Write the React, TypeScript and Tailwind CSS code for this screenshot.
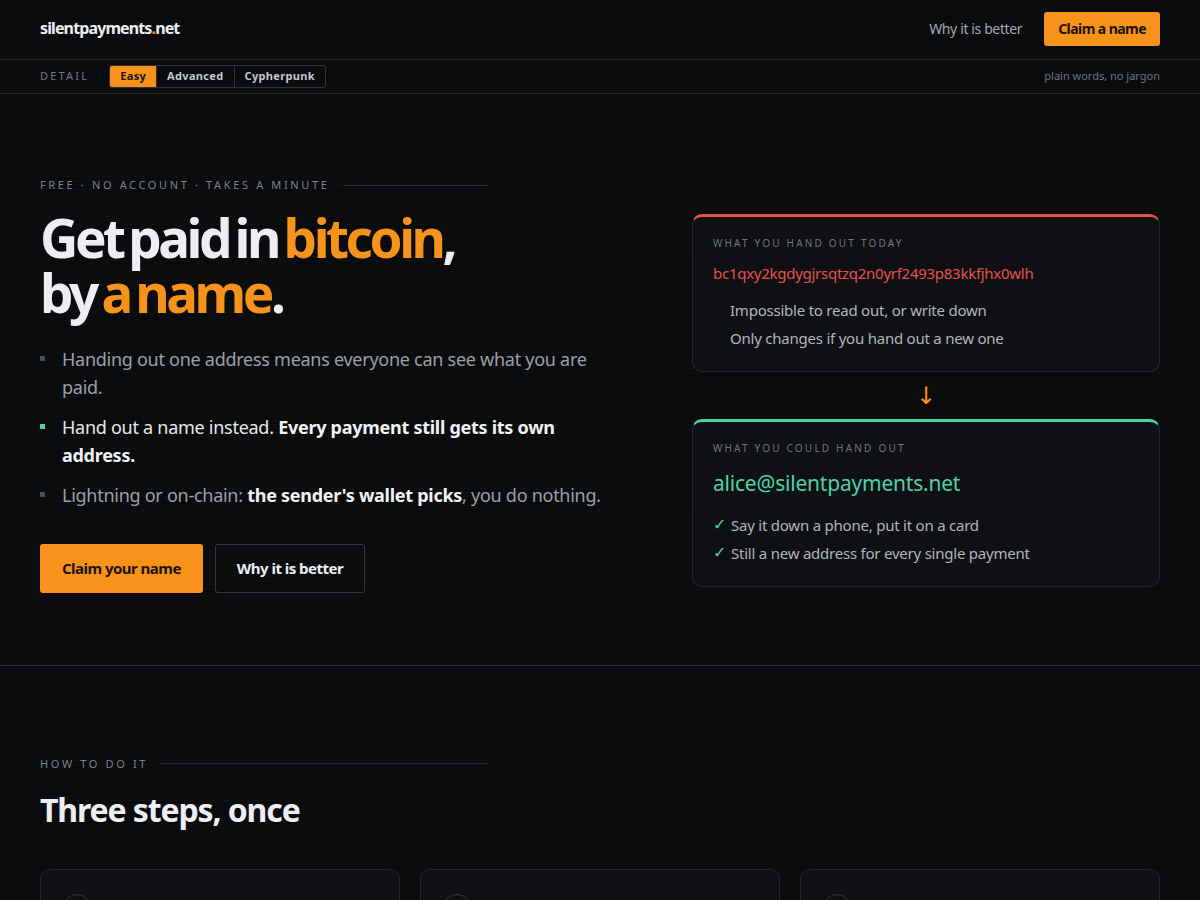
import React, { useState } from 'react'

const levels = ['Easy', 'Advanced', 'Cypherpunk']

const Eyebrow = ({ children }: { children: React.ReactNode }) => (
  <div className="flex items-center gap-[13px] w-[448px]">
    <span className="text-[11px] tracking-[0.24em] uppercase text-[#7d828b] whitespace-nowrap">{children}</span>
    <span className="h-px flex-1 bg-[#2a2d33]" />
  </div>
)

export default function App() {
  const [level, setLevel] = useState('Easy')

  return (
    <div className="min-h-screen bg-[#0a0b0d] text-[#e8eaed] font-['Noto_Sans','Open_Sans',sans-serif]">
      {/* Top bar */}
      <header className="h-[60px] px-10 flex items-center justify-between border-b border-[#24262b]">
        <div className="-mt-[3px] text-[16px] font-bold tracking-[-0.055em] text-[#eceef1]">
          silentpayments<span className="text-[#f7931a]">.</span>net
        </div>
        <div className="-mt-[2px] flex items-center gap-[22px]">
          <a className="text-[14px] tracking-[-0.027em] text-[#a3a8b0]">Why it is better</a>
          <button className="h-[34px] px-[14px] rounded-[3px] bg-[#f7931a] text-[#1a1206] text-[14px] tracking-[-0.04em] font-bold">
            Claim a name
          </button>
        </div>
      </header>

      {/* Detail level */}
      <div className="h-[34px] px-10 flex items-center justify-between border-b border-[#24262b]">
        <div className="flex items-center gap-[20px]">
          <span className="text-[11px] tracking-[0.2em] text-[#737881]">DETAIL</span>
          <div className="flex h-[23px] border border-[#2e3137] rounded-[3px] overflow-hidden">
            {levels.map((l, i) => (
              <button
                key={l}
                onClick={() => setLevel(l)}
                className={`px-[10px] text-[11px] font-bold tracking-[0.03em] ${i > 0 ? 'border-l border-[#2e3137]' : ''} ${
                  level === l ? 'bg-[#f7931a] text-[#1a1206]' : 'text-[#c3c7cd]'
                }`}
              >
                {l}
              </button>
            ))}
          </div>
        </div>
        <span className="text-[11px] text-[#6f747c]">plain words, no jargon</span>
      </div>

      <main className="bg-[repeating-linear-gradient(0deg,rgba(255,255,255,0.014)_0px,rgba(255,255,255,0.014)_1px,transparent_1px,transparent_4px)]">
        {/* Hero */}
        <section className="px-10 pt-[83px] pb-[72px] border-b border-[#2a2d33] grid grid-cols-[1fr_468px] gap-[72px]">
          <div>
            <Eyebrow>Free · No account · Takes a minute</Eyebrow>
            <h1 className="mt-[16px] text-[53px] leading-[55px] font-bold tracking-[-0.065em] [word-spacing:-0.09em] text-[#eceef1]">
              Get paid in <span className="text-[#f7931a]">bitcoin</span>,<br />
              by <span className="text-[#f7931a]">a name</span>.
            </h1>
            <ul className="mt-[25px] flex flex-col gap-3 text-[18px] leading-[28px] tracking-[-0.015em]">
              <li className="flex gap-[17px] text-[#9ba0a8]">
                <span className="mt-[11px] w-[5px] h-[5px] shrink-0 bg-[#4a4e55]" />
                <span>Handing out one address means everyone can see what you are paid.</span>
              </li>
              <li className="flex gap-[17px] text-[#e6e8eb]">
                <span className="mt-[11px] w-[5px] h-[5px] shrink-0 bg-[#4fd1a5]" />
                <span>
                  Hand out a name instead. <b className="font-bold text-[#f1f2f4]">Every payment still gets its own address.</b>
                </span>
              </li>
              <li className="flex gap-[17px] text-[#9ba0a8]">
                <span className="mt-[11px] w-[5px] h-[5px] shrink-0 bg-[#4a4e55]" />
                <span>
                  Lightning or on-chain: <b className="font-bold text-[#f1f2f4]">the sender's wallet picks</b>, you do nothing.
                </span>
              </li>
            </ul>
            <div className="mt-[35px] flex gap-3">
              <button className="h-[49px] px-[22px] rounded-[3px] bg-[#f7931a] text-[#1a1206] text-[15px] tracking-[-0.035em] font-bold">
                Claim your name
              </button>
              <button className="h-[49px] px-[21px] rounded-[3px] border border-[#34373d] text-[#eceef1] text-[15px] tracking-[-0.035em] font-bold">
                Why it is better
              </button>
            </div>
          </div>

          <div className="pt-[37px] flex flex-col items-stretch">
            <div className="rounded-[10px] border border-[#24262b] border-t-[3px] border-t-[#e5534b] bg-[#0f1013] px-5 pt-[19px] pb-[19px]">
              <div className="text-[10px] tracking-[0.22em] text-[#72777f]">WHAT YOU HAND OUT TODAY</div>
              <div className="mt-[11px] text-[15px] leading-[22px] tracking-[-0.018em] text-[#e5534b]">bc1qxy2kgdygjrsqtzq2n0yrf2493p83kkfjhx0wlh</div>
              <ul className="mt-[12px] pl-[17px] text-[15px] leading-[28px] tracking-[-0.015em] text-[#b1b5bb]">
                <li>Impossible to read out, or write down</li>
                <li>Only changes if you hand out a new one</li>
              </ul>
            </div>
            <div className="h-[47px] flex items-center justify-center text-[24px] leading-none text-[#f7931a] font-['DejaVu_Sans',sans-serif]">↓</div>
            <div className="rounded-[10px] border border-[#24262b] border-t-[3px] border-t-[#4fd1a5] bg-[#0f1013] px-5 pt-[19px] pb-[19px]">
              <div className="text-[10px] tracking-[0.22em] text-[#72777f]">WHAT YOU COULD HAND OUT</div>
              <div className="mt-[11px] text-[21px] leading-[32px] tracking-[-0.01em] text-[#4fd1a5]">alice@silentpayments.net</div>
              <ul className="mt-[12px] text-[15px] leading-[28px] tracking-[-0.015em] text-[#b1b5bb]">
                <li className="flex gap-[6px]"><span className="w-[12px] text-[16px] text-[#4fd1a5] font-['DejaVu_Sans',sans-serif]">✓</span>Say it down a phone, put it on a card</li>
                <li className="flex gap-[6px]"><span className="w-[12px] text-[16px] text-[#4fd1a5] font-['DejaVu_Sans',sans-serif]">✓</span>Still a new address for every single payment</li>
              </ul>
            </div>
          </div>
        </section>

        {/* How to */}
        <section className="px-10 pt-[90px] pb-20">
          <Eyebrow>How to do it</Eyebrow>
          <h2 className="mt-[18px] text-[32px] leading-[40px] font-bold tracking-[-0.035em] text-[#eceef1]">Three steps, once</h2>
          <div className="mt-[39px] grid grid-cols-3 gap-5">
            {[1, 2, 3].map(n => (
              <div key={n} className="h-[200px] rounded-[10px] border border-[#24262b] bg-[#0f1013] px-[22px] py-6">
                <div className="w-7 h-7 rounded-full border border-[#34373d]" />
              </div>
            ))}
          </div>
        </section>
      </main>
    </div>
  )
}
